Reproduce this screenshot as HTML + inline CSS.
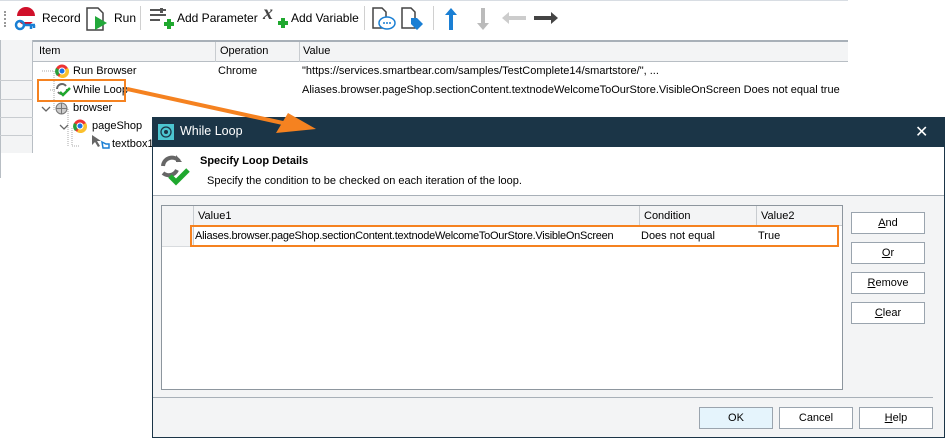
<!DOCTYPE html>
<html><head><meta charset="utf-8"><style>
*{box-sizing:border-box;margin:0;padding:0}
body{width:945px;height:440px;overflow:hidden;background:#fff;font-family:"Liberation Sans",sans-serif;font-size:11px;color:#000;position:relative}
.a{position:absolute}
.tb{left:0;top:0;width:848px;height:37px;background:#fff;border-top:1px solid #d8dde3}
.tbt{font-size:12px;top:11px}
.sep{width:1px;height:24px;top:6px;background:#d0d0d0}
.hdr{background:#f3f4f5;border-top:2px solid #a8b0b8;border-bottom:1px solid #b8bec4}
.vl{width:1px;background:#c8ccd0}
.hl{height:1px;background:#d8dbde}
.btn{border:1px solid #9aa4ae;background:#fff;text-align:center;line-height:20px;height:22px;width:74px}
u{text-decoration:underline}
</style></head><body>
<div class="a tb"></div>
<div class="a" style="left:4px;top:11px;width:2px;height:16px;border-left:2px dotted #999"></div>
<svg class="a" style="left:12px;top:5px" width="28" height="28"><circle cx="14" cy="11" r="9" fill="#d0102a"/><rect x="4" y="11" width="20" height="6" fill="#fff"/><circle cx="8" cy="20" r="4" fill="none" stroke="#1a7fd4" stroke-width="2.5"/><path d="M11 20h12M19 20v4M22 20v3" stroke="#1a7fd4" stroke-width="2.5"/></svg>
<div class="a tbt" style="left:42px">Record</div>
<svg class="a" style="left:84px;top:6px" width="28" height="26"><path d="M3 2h11l5 5v17H3z" fill="#fff" stroke="#444" stroke-width="1.5"/><path d="M11 10l12 7-12 7z" fill="#22a83a"/></svg>
<div class="a tbt" style="left:114px">Run</div>
<div class="a sep" style="left:140px"></div>
<svg class="a" style="left:148px;top:6px" width="28" height="26"><path d="M2 4h16M2 9h16M2 14h10" stroke="#555" stroke-width="2"/><rect x="12" y="2" width="3" height="5" fill="#555"/><path d="M16 18h10M21 13v10" stroke="#1fa82e" stroke-width="4"/></svg>
<div class="a tbt" style="left:177px">Add Parameter</div>
<div class="a" style="left:263px;top:2px;font:italic bold 20px 'Liberation Serif',serif;color:#444">x</div>
<svg class="a" style="left:264px;top:6px" width="28" height="26"><path d="M14 17h10M19 12v10" stroke="#1fa82e" stroke-width="4"/></svg>
<div class="a tbt" style="left:291px">Add Variable</div>
<div class="a sep" style="left:364px"></div>
<svg class="a" style="left:371px;top:6px" width="26" height="26"><path d="M2 2h9l4 4v16H2z" fill="#fff" stroke="#444" stroke-width="1.5"/><ellipse cx="16" cy="17" rx="8" ry="6" fill="#fff" stroke="#1a7fd4" stroke-width="1.5"/><circle cx="13" cy="17" r="1" fill="#1a7fd4"/><circle cx="16" cy="17" r="1" fill="#1a7fd4"/><circle cx="19" cy="17" r="1" fill="#1a7fd4"/></svg>
<svg class="a" style="left:400px;top:6px" width="26" height="26"><path d="M2 2h9l4 4v16H2z" fill="#fff" stroke="#444" stroke-width="1.5"/><path d="M11 12h6l6 6-6 6-6-6z" fill="#1a7fd4"/></svg>
<div class="a sep" style="left:433px"></div>
<svg class="a" style="left:443px;top:6px" width="16" height="26"><path d="M8 2l6 7H10v15H6V9H2z" fill="#1a7fd4"/></svg>
<svg class="a" style="left:475px;top:6px" width="16" height="26"><path d="M8 24l6-7H10V2H6v15H2z" fill="#bbb"/></svg>
<svg class="a" style="left:500px;top:10px" width="28" height="16"><path d="M2 8l7-6v4h17v4H9v4z" fill="#ccc"/></svg>
<svg class="a" style="left:532px;top:10px" width="28" height="16"><path d="M26 8l-7-6v4H2v4h17v4z" fill="#444"/></svg>

<!-- grid -->
<div class="a hdr" style="left:0;top:40px;width:848px;height:22px"></div>
<div class="a" style="left:0;top:40px;width:33px;height:113px;border-right:1px solid #b8bec4;background:#f3f4f5"></div>
<div class="a" style="left:0;top:40px;width:1px;height:138px;background:#b8bec4"></div>
<div class="a hl" style="left:0;top:80px;width:33px;background:#c8ccd0"></div>
<div class="a hl" style="left:0;top:99px;width:33px;background:#c8ccd0"></div>
<div class="a hl" style="left:0;top:117px;width:33px;background:#c8ccd0"></div>
<div class="a hl" style="left:0;top:135px;width:33px;background:#c8ccd0"></div>
<div class="a vl" style="left:215px;top:42px;height:20px"></div>
<div class="a vl" style="left:299px;top:42px;height:20px"></div>
<div class="a" style="left:39px;top:45px">Item</div>
<div class="a" style="left:220px;top:45px">Operation</div>
<div class="a" style="left:303px;top:45px">Value</div>
<svg class="a" style="left:40px;top:62px" width="120" height="95"><path d="M2 9h12M10 28h6M14 9v40M28 47v38M32 66v18h8" stroke="#aaa" stroke-dasharray="1 1" fill="none"/><path d="M2 45l4 4 4-4M20 63l4 4 4-4" stroke="#666" fill="none" stroke-width="1.3"/></svg>
<svg class="a" style="left:55px;top:64px" width="14" height="14"><circle cx="7" cy="7" r="6.5" fill="#e33"/><path d="M7 7l-5 5A6.5 6.5 0 0 1 1 4z" fill="#2a9d3a"/><path d="M7 7l6-3a6.5 6.5 0 0 1-9 9z" fill="#fbc02d"/><circle cx="7" cy="7" r="3" fill="#1a73e8" stroke="#fff"/></svg>
<div class="a" style="left:73px;top:65px">Run Browser</div>
<div class="a" style="left:218px;top:65px">Chrome</div>
<div class="a" style="left:302px;top:65px">"https://services.smartbear.com/samples/TestComplete14/smartstore/", ...</div>
<svg class="a" style="left:54px;top:82px" width="18" height="16"><path d="M3 7a5 5 0 0 1 9-3M13 7a5 5 0 0 1-9 3" stroke="#666" stroke-width="2" fill="none"/><path d="M6 10l3 3 7-7" stroke="#1fa82e" stroke-width="2.5" fill="none"/></svg>
<div class="a" style="left:73px;top:84px">While Loop</div>
<div class="a" style="left:37px;top:79px;width:89px;height:23px;border:2px solid #f58220"></div>
<div class="a" style="left:302px;top:84px">Aliases.browser.pageShop.sectionContent.textnodeWelcomeToOurStore.VisibleOnScreen Does not equal true</div>
<svg class="a" style="left:55px;top:102px" width="13" height="13"><circle cx="6.5" cy="6.5" r="5.5" fill="#ccc" stroke="#777"/><path d="M1 6.5h11M6.5 1v11" stroke="#777"/></svg>
<div class="a" style="left:73px;top:102px">browser</div>
<svg class="a" style="left:73px;top:119px" width="14" height="14"><circle cx="7" cy="7" r="6.5" fill="#e33"/><path d="M7 7l-5 5A6.5 6.5 0 0 1 1 4z" fill="#2a9d3a"/><path d="M7 7l6-3a6.5 6.5 0 0 1-9 9z" fill="#fbc02d"/><circle cx="7" cy="7" r="3" fill="#1a73e8" stroke="#fff"/></svg>
<div class="a" style="left:92px;top:120px">pageShop</div>
<svg class="a" style="left:90px;top:134px" width="22" height="16"><path d="M2 1v10l3-3 3 5 2-1-3-5h4z" fill="#666"/><path d="M12 8l4 2 3 0v4h-6z" fill="none" stroke="#1a7fd4" stroke-width="1.5"/></svg>
<div class="a" style="left:112px;top:138px">textbox1</div>

<!-- dialog -->
<div class="a" style="left:152px;top:117px;width:793px;height:321px;background:#f3f4f5;border:1px solid #1b3547"></div>
<div class="a" style="left:152px;top:117px;width:793px;height:30px;background:#1b3547"></div>
<svg class="a" style="left:158px;top:124px" width="16" height="16"><rect x="0" y="0" width="16" height="16" fill="#4cc5d0"/><circle cx="8" cy="8" r="5" fill="none" stroke="#1b3547" stroke-width="1.3"/><circle cx="8" cy="8" r="2" fill="#1b3547"/></svg>
<div class="a" style="left:180px;top:124px;color:#fff;font-size:12.5px">While Loop</div>
<div class="a" style="left:915px;top:122px;color:#fff;font-size:16px">✕</div>
<div class="a" style="left:153px;top:147px;width:791px;height:49px;background:#fff;border-bottom:1px solid #a8b0b8"></div>
<svg class="a" style="left:157px;top:152px" width="36" height="36"><path d="M6 14a9 9 0 0 1 16-5M20 18a9 9 0 0 1-14 3" stroke="#666" stroke-width="4" fill="none"/><path d="M19 3v7h6z" fill="#666"/><path d="M13 24l6 6 12-12" stroke="#1fa82e" stroke-width="5" fill="none"/></svg>
<div class="a" style="left:200px;top:155px;font-weight:bold">Specify Loop Details</div>
<div class="a" style="left:207px;top:175px">Specify the condition to be checked on each iteration of the loop.</div>

<div class="a" style="left:161px;top:205px;width:682px;height:185px;background:#fff;border:1px solid #8d969e"></div>
<div class="a" style="left:162px;top:206px;width:680px;height:20px;background:#f3f4f5;border-bottom:1px solid #c8ccd0"></div>
<div class="a" style="left:162px;top:206px;width:32px;height:41px;background:#f3f4f5;border-right:1px solid #c8ccd0"></div>
<div class="a hl" style="left:162px;top:246px;width:32px"></div>
<div class="a vl" style="left:639px;top:206px;height:20px"></div>
<div class="a vl" style="left:756px;top:206px;height:20px"></div>
<div class="a" style="left:198px;top:210px">Value1</div>
<div class="a" style="left:644px;top:210px">Condition</div>
<div class="a" style="left:761px;top:210px">Value2</div>
<div class="a" style="left:190px;top:225px;width:649px;height:22px;border:2px solid #f58220"></div>
<div class="a" style="left:195px;top:230px;letter-spacing:-0.25px">Aliases.browser.pageShop.sectionContent.textnodeWelcomeToOurStore.VisibleOnScreen</div>
<div class="a" style="left:641px;top:230px">Does not equal</div>
<div class="a" style="left:758px;top:230px">True</div>

<div class="a btn" style="left:851px;top:212px"><u>A</u>nd</div>
<div class="a btn" style="left:851px;top:242px"><u>O</u>r</div>
<div class="a btn" style="left:851px;top:272px"><u>R</u>emove</div>
<div class="a btn" style="left:851px;top:302px"><u>C</u>lear</div>
<div class="a" style="left:153px;top:397px;width:780px;height:1px;background:#a8b0b8"></div>
<div class="a btn" style="left:699px;top:407px;background:#e5f4fc">OK</div>
<div class="a btn" style="left:779px;top:407px">Cancel</div>
<div class="a btn" style="left:859px;top:407px"><u>H</u>elp</div>

<!-- arrow on top -->
<svg class="a" style="left:0;top:0" width="945" height="440"><path d="M127 89L292 125" stroke="#f58220" stroke-width="4"/><path d="M316 129L276 133 288 113z" fill="#f58220"/></svg>
</body></html>
